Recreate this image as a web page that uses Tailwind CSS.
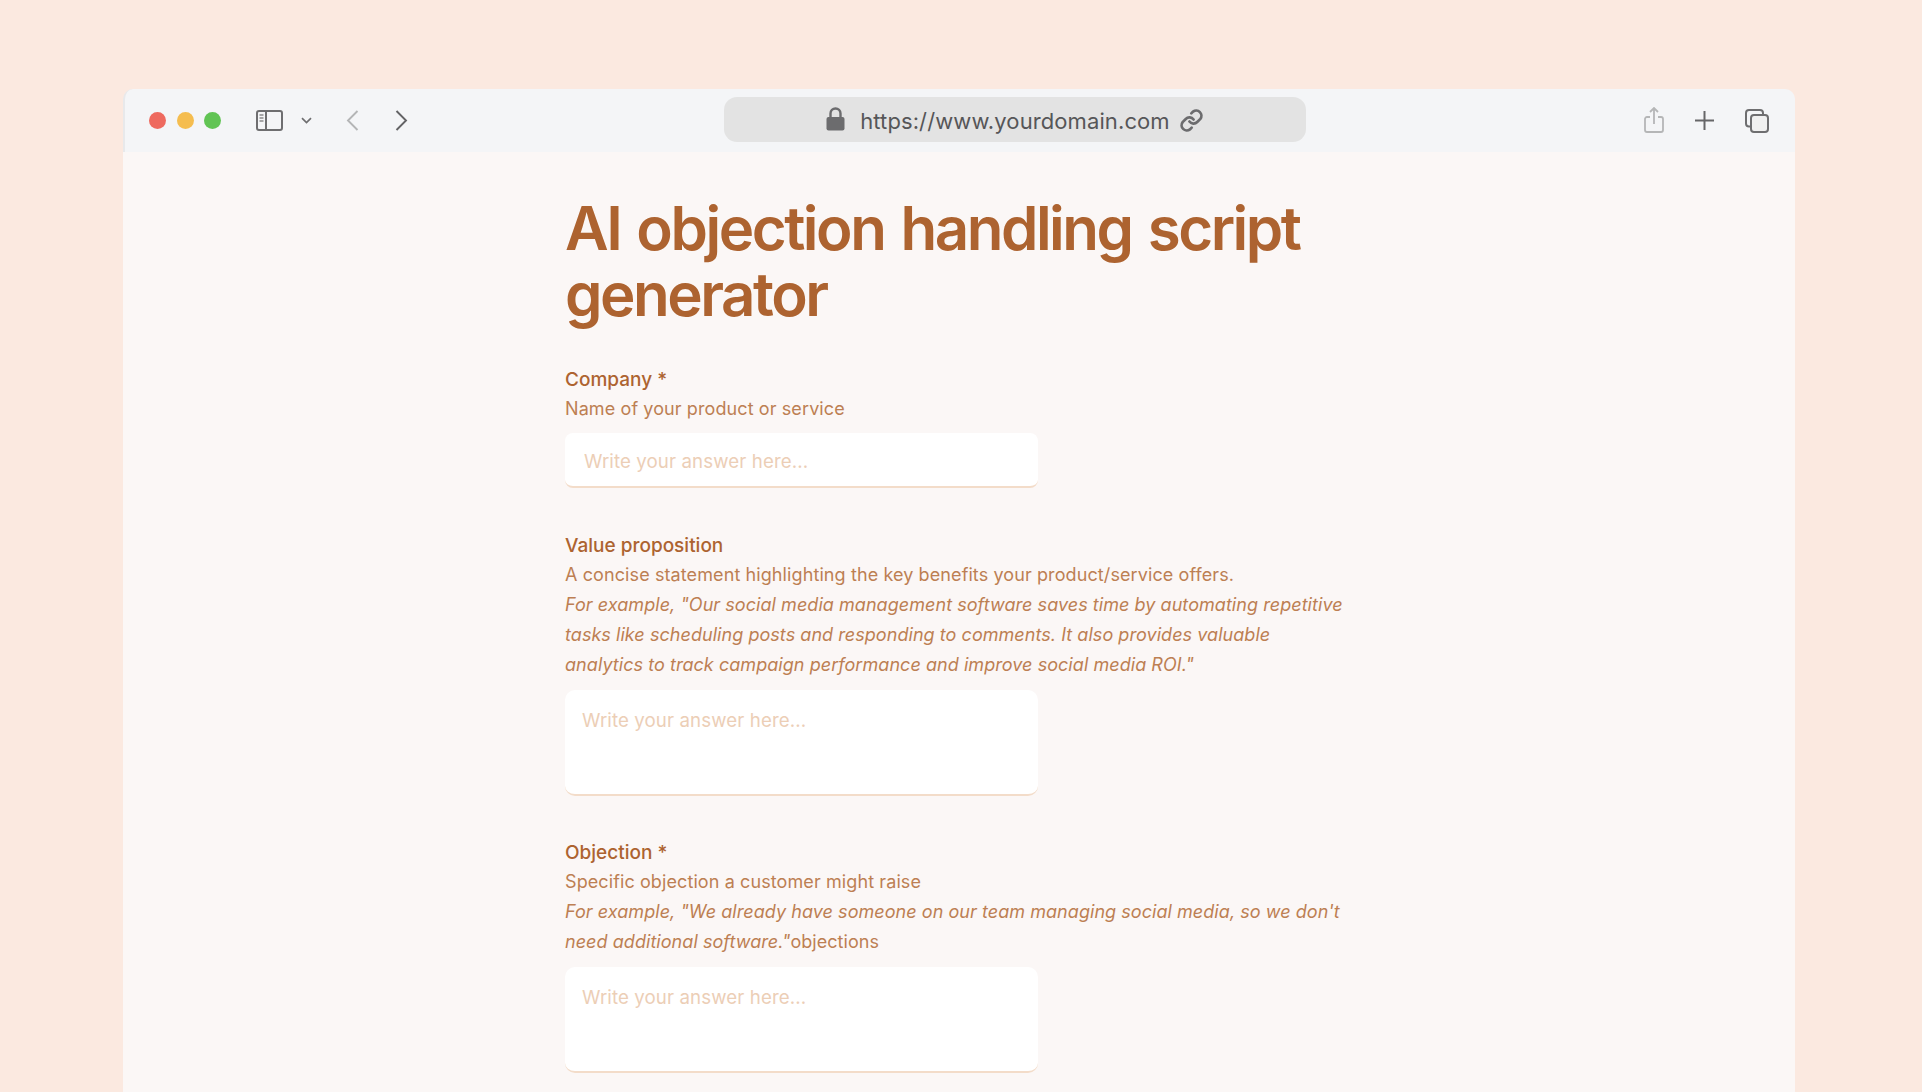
<!DOCTYPE html>
<html lang="en">
<head>
<meta charset="utf-8">
<title>AI objection handling script generator</title>
<script src="https://cdn.jsdelivr.net/npm/@tailwindcss/browser@4"></script>
</head>
<body class="bg-[#fbe9e0] h-[1092px] overflow-hidden font-['Inter',sans-serif]">
  <div class="pt-[89px] pl-[123px]">
    <div class="w-[1672px] h-[1003px] flex flex-col">
      <!-- browser toolbar -->
      <div class="h-[63px] shrink-0 bg-[#f4f5f7] rounded-t-[10px] border-l-2 border-[#e8e9eb] relative flex items-center">
        <div class="flex items-center gap-[10.5px] ml-[24px]">
          <span class="w-[17px] h-[17px] rounded-full bg-[#ee6a5f]"></span>
          <span class="w-[17px] h-[17px] rounded-full bg-[#f5bd4f]"></span>
          <span class="w-[17px] h-[17px] rounded-full bg-[#61c454]"></span>
        </div>
        <!-- sidebar toggle -->
        <svg class="ml-[35px]" width="27" height="21" viewBox="0 0 27 21" fill="none">
          <rect x="1" y="1" width="25" height="19" rx="2" stroke="#6e6e70" stroke-width="2"/>
          <path d="M10 1v19" stroke="#6e6e70" stroke-width="2"/>
          <path d="M3.5 5h4M3.5 8h4M3.5 11h4" stroke="#8a8a8c" stroke-width="1.5"/>
        </svg>
        <svg class="ml-[18px]" width="11" height="7" viewBox="0 0 11 7" fill="none">
          <path d="M1 1.2l4.5 4.3L10 1.2" stroke="#6e6e70" stroke-width="1.7"/>
        </svg>
        <svg class="ml-[34px]" width="13" height="21" viewBox="0 0 13 21" fill="none">
          <path d="M11.5 1L2 10.5 11.5 20" stroke="#b4b5b6" stroke-width="1.9"/>
        </svg>
        <svg class="ml-[36px]" width="13" height="21" viewBox="0 0 13 21" fill="none">
          <path d="M1.5 1L11 10.5 1.5 20" stroke="#636365" stroke-width="1.9"/>
        </svg>
        <!-- address bar -->
        <div class="absolute left-[599px] top-[8px] w-[582px] h-[45px] bg-[#e3e3e3] rounded-[13px] flex items-center justify-center text-[#565658] text-[22px] tracking-[0.1px]">
          <svg class="mr-[15px] mb-[1px]" width="19" height="24" viewBox="0 0 19 24" fill="none">
            <path d="M4.5 11V6.5a5 5 0 0 1 10 0V11" stroke="#6c6c6e" stroke-width="2.4"/>
            <rect x="0.5" y="10" width="18" height="13.5" rx="2" fill="#6c6c6e"/>
          </svg>
          <span class="mt-[3px]">https://www.yourdomain.com</span>
          <svg class="ml-[9px] mt-[1px]" width="25" height="25" viewBox="0 0 24 24" fill="none" stroke="#6c6c6e" stroke-width="2.6" stroke-linecap="round">
            <path d="M10 13a5 5 0 0 0 7.5.5l3-3a5 5 0 0 0-7-7l-1.7 1.7"/>
            <path d="M14 11a5 5 0 0 0-7.5-.5l-3 3a5 5 0 0 0 7 7l1.7-1.7"/>
          </svg>
        </div>
        <div class="ml-auto mr-[26px] flex items-center">
          <!-- share -->
          <svg class="mb-[2px]" width="20" height="26" viewBox="0 0 20 26" fill="none" stroke="#b5b6b7" stroke-width="1.8">
            <path d="M6 10H3a2 2 0 0 0-2 2v11a2 2 0 0 0 2 2h14a2 2 0 0 0 2-2V12a2 2 0 0 0-2-2h-3"/>
            <path d="M10 17V1.5M6 5l4-4 4 4"/>
          </svg>
          <!-- new tab -->
          <svg class="ml-[31px]" width="19" height="19" viewBox="0 0 19 19" fill="none" stroke="#666668" stroke-width="2">
            <path d="M9.5 0v19M0 9.5h19"/>
          </svg>
          <!-- tabs -->
          <svg class="ml-[31px]" width="24" height="24" viewBox="0 0 24 24" fill="none" stroke="#6e6e70" stroke-width="2">
            <path d="M6 17.5H4a3 3 0 0 1-3-3V4a3 3 0 0 1 3-3h11a3 3 0 0 1 3 3v2"/>
            <rect x="6" y="6" width="17" height="17" rx="3" fill="#f0f0f0"/>
          </svg>
        </div>
      </div>

      <!-- page content -->
      <div class="flex-1 bg-[#fbf7f6] pl-[442px] pt-[43px] text-[18px] leading-[30px] text-[#bd7f53] tracking-[0.1px]">
        <h1 class="w-[760px] text-[60px] leading-[66px] font-semibold text-[#ad6330] tracking-[-2.47px] [word-spacing:3.4px]">AI objection handling script generator</h1>

        <label class="block mt-[38px] text-[19px] leading-[29px] tracking-normal text-[#ad6330] font-medium">Company *</label>
        <p>Name of your product or service</p>
        <input type="text" placeholder="Write your answer here..." class="block mt-[9px] w-[473px] h-[55px] px-[19px] pt-[4px] text-[18.7px] bg-white rounded-[8px] border-b-2 border-[#f3dcc9] outline-none placeholder:text-[#ecceb6]">

        <label class="block mt-[43px] text-[19px] leading-[29px] tracking-normal text-[#ad6330] font-medium">Value proposition</label>
        <p>A concise statement highlighting the key benefits your product/service offers.</p>
        <p class="w-[780px] italic tracking-[0.05px]">For example, "Our social media management software saves time by automating repetitive tasks like scheduling posts and responding to comments. It also provides valuable analytics to track campaign performance and improve social media ROI."</p>
        <textarea placeholder="Write your answer here..." class="block mt-[10px] w-[473px] h-[106px] px-[17px] pt-[16px] pb-[14px] text-[18.7px] bg-white rounded-[10px] border-b-2 border-[#f3dcc9] outline-none resize-none placeholder:text-[#ecceb6]"></textarea>

        <label class="block mt-[42px] text-[19px] leading-[29px] tracking-normal text-[#ad6330] font-medium">Objection *</label>
        <p>Specific objection a customer might raise</p>
        <p class="w-[780px] tracking-[0.05px]"><span class="italic">For example, "We already have someone on our team managing social media, so we don't need additional software."</span>objections</p>
        <textarea placeholder="Write your answer here..." class="block mt-[10px] w-[473px] h-[106px] px-[17px] pt-[16px] pb-[14px] text-[18.7px] bg-white rounded-[10px] border-b-2 border-[#f3dcc9] outline-none resize-none placeholder:text-[#ecceb6]"></textarea>
      </div>
    </div>
  </div>
</body>
</html>
